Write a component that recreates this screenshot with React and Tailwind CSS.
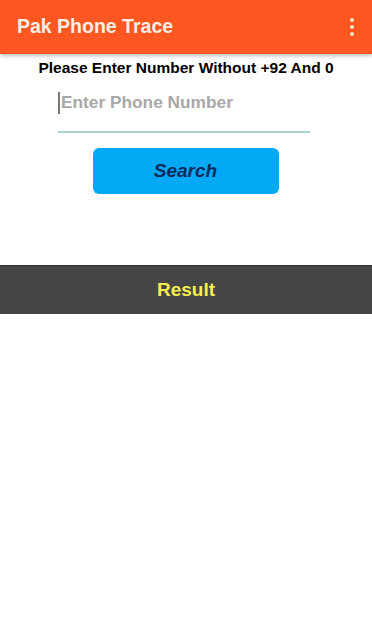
export default function App() {
  return (
    <div className="w-[372px] h-[620px] bg-white flex flex-col" style={{ fontFamily: '"Liberation Sans", Arial, sans-serif' }}>
      <div className="h-[54px] bg-[#fe5722] flex items-center justify-between pl-[17px] pr-[18px] shadow-[0_2px_4px_rgba(0,0,0,0.25)] relative z-10">
        <span className="text-[19.5px] font-bold text-[#fdeee6]">Pak Phone Trace</span>
        <div className="flex flex-col gap-[3px] items-center">
          <span className="w-[4px] h-[4px] rounded-full bg-[#f6e7c8]" />
          <span className="w-[4px] h-[4px] rounded-full bg-[#f6e7c8]" />
          <span className="w-[4px] h-[4px] rounded-full bg-[#f6e7c8]" />
        </div>
      </div>
      <div className="flex flex-col items-center">
        <div className="mt-[5px] text-[15.5px] font-bold text-black leading-[18px]">Please Enter Number Without +92 And 0</div>
        <div className="mt-[14px] w-[252px] ml-[-4px] relative">
          <div className="flex items-center h-[24px]">
            <span className="w-[2px] h-[22px] bg-[#777] mr-[1px]" />
            <span className="text-[17.3px] font-bold text-[#a8a8a8]">Enter Phone Number</span>
          </div>
          <div className="mt-[16px] h-[2px] bg-[#a9d3cf]" />
        </div>
        <button className="mt-[15px] w-[186px] h-[46px] ml-[-1px] rounded-[6px] bg-[#03a9f4] flex items-center justify-center text-[19px] font-bold italic text-[#0d2b5e]">Search</button>
      </div>
      <div className="mt-[71px] h-[49px] bg-[#454545] flex items-center justify-center border-t border-[#333]">
        <span className="text-[19px] font-bold text-[#f4ef4c]">Result</span>
      </div>
    </div>
  );
}
